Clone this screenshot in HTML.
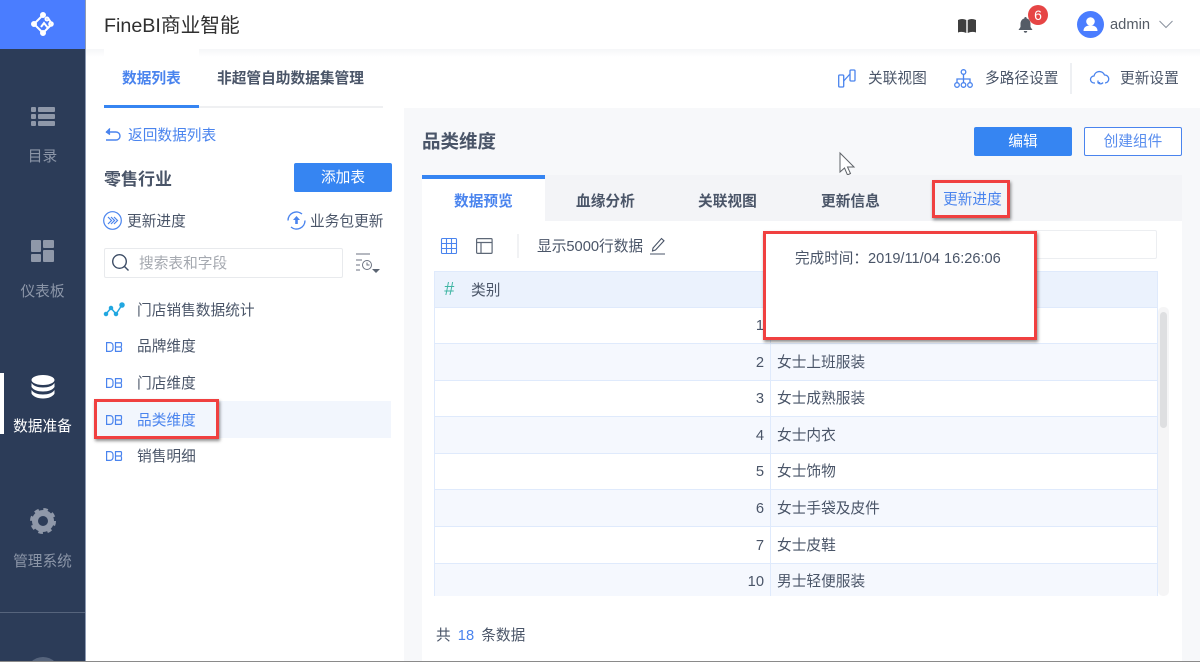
<!DOCTYPE html>
<html lang="zh-CN"><head><meta charset="utf-8"><title>FineBI</title>
<style>
*{box-sizing:border-box}
html,body{margin:0;padding:0;width:1200px;height:662px;overflow:hidden;background:#fff;font-family:"Liberation Sans","Noto Sans CJK SC",sans-serif;color:#3d4d66}
#root{position:absolute;left:0;top:0;width:1200px;height:662px;overflow:hidden;background:#fff}
.a{position:absolute;white-space:nowrap}
.t{position:absolute;white-space:nowrap;font-size:14.7px;line-height:20px;color:#4a5568;margin-top:1px}
.b{font-weight:700}
svg{position:absolute;overflow:visible}
.redbox{position:absolute;border:3px solid #f04040;box-shadow:1px 2px 3px rgba(0,0,0,.45)}
.row{position:absolute;left:434px;width:724px;height:37px;border:1px solid #dfeafc;border-width:0 1px 1px 1px}
.row.o{background:#f5f8fe}
.n,.c{position:absolute;white-space:nowrap;font-size:14.7px;line-height:20px;color:#4a5568;margin-top:1px}
.n{width:330px;left:434px;text-align:right}
.c{left:777px}
.side{position:absolute;left:0;width:85px;text-align:center;font-size:14.7px;line-height:20px;color:#8c96a8;margin-top:1px}
</style></head><body><div id="root">
<!-- sidebar -->
<div class="a" style="left:0;top:0;width:85px;height:662px;background:#2c3c58"></div>
<div class="a" style="left:85px;top:0;width:1px;height:662px;background:#8e9bb3"></div>
<div class="a" style="left:0;top:0;width:85px;height:49px;background:#4a7dff"></div>
<svg style="left:31px;top:12px" width="24" height="26" viewBox="0 0 24 26" fill="none" stroke="#fff" stroke-width="2"><path d="M12 3 3 12l9 9 5-5-4-5-3 4M17 6l4 6-4 4"/><circle cx="12" cy="3" r="2" fill="#fff"/><circle cx="3" cy="12" r="2" fill="#fff"/><circle cx="12" cy="21" r="2" fill="#fff"/><circle cx="20" cy="12" r="1.800"/><circle cx="16" cy="7" r="1.500"/></svg>
<svg style="left:31px;top:107px" width="24" height="20" viewBox="0 0 24 20" fill="#8f98a9"><rect width="5" height="5" rx="1"/><rect x="7" width="17" height="5" rx="1"/><rect y="7" width="5" height="5" rx="1"/><rect x="7" y="7" width="17" height="5" rx="1"/><rect y="14" width="5" height="5" rx="1"/><rect x="7" y="14" width="17" height="5" rx="1"/></svg>
<div class="side" style="top:146px">目录</div>
<svg style="left:31px;top:240px" width="24" height="22" viewBox="0 0 24 22" fill="#8f98a9"><rect width="10" height="12" rx="1"/><rect x="12" width="11" height="8" rx="1"/><rect y="14" width="10" height="8" rx="1"/><rect x="12" y="10" width="11" height="12" rx="1"/></svg>
<div class="side" style="top:281px">仪表板</div>
<div class="a" style="left:0;top:373px;width:4px;height:61px;background:#fff"></div>
<svg style="left:31px;top:375px" width="24" height="24" viewBox="0 0 24 24" fill="#fff"><ellipse cx="12" cy="5" rx="11.500" ry="5"/><path d="M.5 8c2 3 6 4.500 11.500 4.500S21.500 11 23.500 8v4c-2 3-6 4.500-11.500 4.500S2.500 15 .5 12zM.5 15c2 3 6 4.500 11.500 4.500s9.500-1.500 11.500-4.500v3.500c-1.500 3-6 5-11.500 5S2 21.500.5 18.500z"/></svg>
<div class="side" style="top:416px;color:#fff">数据准备</div>
<svg style="left:30px;top:508px" width="26" height="26" viewBox="0 0 26 26"><circle cx="13" cy="13" r="8" fill="none" stroke="#8f98a9" stroke-width="6"/><circle cx="13" cy="13" r="11.500" fill="none" stroke="#8f98a9" stroke-width="3" stroke-dasharray="4.500 4.530"/></svg>
<div class="side" style="top:551px">管理系统</div>
<div class="a" style="left:0;top:612px;width:85px;height:1px;background:#56647c"></div>
<div class="a" style="left:26px;top:657px;width:34px;height:34px;border-radius:50%;background:#56647c"></div>
<!-- top bar -->
<div class="a" style="left:86px;top:49px;width:1114px;height:8px;background:linear-gradient(#f5f6f8,#fff)"></div>
<div class="a" style="left:104px;top:49px;width:95px;height:8px;background:#fff"></div>
<div class="a" style="left:104px;top:12px;font-size:19.700px;line-height:28px;color:#2f2f2f">FineBI商业智能</div>
<svg style="left:958px;top:18px" width="18" height="15" viewBox="0 0 18 15" fill="#3f3f3f"><path d="M0 2q4-2 8.300 0v13Q4 13 0 14.500zM9.700 2q4-2 8.300 0v12.500q-4-1.500-8.300.5z"/></svg>
<svg style="left:1018px;top:17px" width="15" height="16" viewBox="0 0 15 16" fill="#555c66"><path d="M7.500 0a1.200 1.200 0 0 1 1.200 1.500C11 2 12.500 4 12.500 7v3l2 3H.5l2-3V7c0-3 1.500-5 3.800-5.500A1.200 1.200 0 0 1 7.500 0zM5.800 14h3.400a1.700 1.700 0 0 1-3.400 0z"/></svg>
<div class="a" style="left:1028px;top:5px;width:20px;height:20px;border-radius:50%;background:#e64545;color:#fff;font-size:14px;line-height:20px;text-align:center">6</div>
<svg style="left:1077px;top:11px" width="27" height="27" viewBox="0 0 27 27"><circle cx="13.500" cy="13.500" r="13.500" fill="#4a7dff"/><circle cx="13.500" cy="10.500" r="4.300" fill="#fff"/><path d="M6.500 20c0-4 3-5.500 7-5.500s7 1.500 7 5.500z" fill="#fff"/></svg>
<div class="t" style="left:1110px;top:14px;color:#555c66">admin</div>
<svg style="left:1159px;top:20px" width="14" height="9" viewBox="0 0 14 9" fill="none" stroke="#8a929e" stroke-width="1"><path d="M.5 1 7 7.500 13.500 1"/></svg>
<!-- header tabs -->
<div class="t b" style="left:122px;top:68px;color:#4a84ee">数据列表</div>
<div class="t b" style="left:217px;top:68px">非超管自助数据集管理</div>
<div class="a" style="left:104px;top:106px;width:279px;height:2px;background:#eff0f2"></div>
<div class="a" style="left:104px;top:105px;width:95px;height:3px;background:#3685f2"></div>
<svg style="left:838px;top:69px" width="18" height="19" viewBox="0 0 18 19" fill="none" stroke="#4a84ee" stroke-width="1.300"><rect x=".7" y="6" width="5" height="12" rx="1"/><rect x="12" y="1" width="5" height="11" rx="1"/><path d="M5.700 12 12 5"/></svg>
<div class="t" style="left:868px;top:68px">关联视图</div>
<svg style="left:954px;top:69px" width="19" height="19" viewBox="0 0 19 19" fill="none" stroke="#4a84ee" stroke-width="1.300"><circle cx="9.500" cy="3" r="2.300"/><circle cx="3" cy="16" r="2.300"/><circle cx="9.500" cy="16" r="2.300"/><circle cx="16" cy="16" r="2.300"/><path d="M9.500 5.300v8.400M3 13.700V10h13v3.700"/></svg>
<div class="t" style="left:985px;top:68px">多路径设置</div>
<div class="a" style="left:1070px;top:63px;width:2px;height:31px;background:#eef0f3"></div>
<svg style="left:1090px;top:70px" width="19" height="17" viewBox="0 0 19 17" fill="none" stroke="#4a84ee" stroke-width="1.300"><path d="M5 13H4A3.500 3.500 0 0 1 4 6 5.500 5.500 0 0 1 14.500 5 4 4 0 0 1 15 13M8 12.500a3 3 0 0 0 5 0M8 10.500v2.200h2.200"/></svg>
<div class="t" style="left:1120px;top:68px">更新设置</div>
<!-- left panel -->
<svg style="left:105px;top:128px" width="16" height="14" viewBox="0 0 16 14" fill="none" stroke="#4a84ee" stroke-width="1.400"><path d="M1 4h10a3.800 3.800 0 0 1 0 8H1"/><path d="M5 0.500 1.500 4 5 6.500" fill="#4a84ee"/></svg>
<div class="t" style="left:128px;top:125px;color:#4a84ee">返回数据列表</div>
<div class="t b" style="left:104px;top:168px;font-size:17px;line-height:22px">零售行业</div>
<div class="a" style="left:294px;top:163px;width:98px;height:29px;background:#3685f2;border-radius:2px;color:#fff;font-size:14.700px;line-height:31px;text-align:center">添加表</div>
<svg style="left:103px;top:211px" width="19" height="19" viewBox="0 0 19 19" fill="none" stroke="#4a84ee" stroke-width="1.200"><circle cx="9.500" cy="9.500" r="8.800"/><path d="m5 6 3.500 3.500L5 13M8 6l3.500 3.500L8 13M11 6l3.500 3.500L11 13"/></svg>
<div class="t" style="left:127px;top:211px">更新进度</div>
<svg style="left:287px;top:211px" width="19" height="19" viewBox="0 0 19 19" fill="none" stroke="#4a84ee" stroke-width="1.400"><path d="M1 9.500A8.500 8.500 0 0 1 15 3M18 9.500A8.500 8.500 0 0 1 4 16"/><path d="M9.500 5 6 9h2.200v4h2.600V9H13z" fill="#4a84ee" stroke="none"/></svg>
<div class="t" style="left:310px;top:211px">业务包更新</div>
<div class="a" style="left:104px;top:248px;width:239px;height:30px;border:1px solid #e8eaed;border-radius:2px;background:#fff"></div>
<svg style="left:111px;top:253px" width="20" height="20" viewBox="0 0 20 20" fill="none" stroke="#3d4d66" stroke-width="1.400"><circle cx="8.500" cy="8.500" r="6.800"/><path d="m13.500 13.500 4 4"/></svg>
<div class="t" style="left:139px;top:253px;color:#a5a9b0">搜索表和字段</div>
<svg style="left:355px;top:253px" width="26" height="22" viewBox="0 0 26 22" fill="none" stroke="#6b7280" stroke-width="1"><path d="M1 1h14M1 7h6M1 12h4M1 17h4"/><circle cx="12" cy="12" r="4.500"/><path d="M12 9.500V12h2.500"/><path d="M17 16h8l-4 4z" fill="#5b6472" stroke="none"/></svg>
<!-- list -->
<div class="a" style="left:94px;top:401px;width:297px;height:37px;background:#f2f6fd"></div>
<svg style="left:104px;top:302px" width="20" height="16" viewBox="0 0 20 16" fill="none" stroke="#22a7e0" stroke-width="1.500"><path d="M2 12 7 6l5 6 6-9"/><circle cx="2" cy="12" r="1.500" fill="#22a7e0"/><circle cx="7" cy="6" r="1.500" fill="#22a7e0"/><circle cx="12" cy="12" r="1.500" fill="#22a7e0"/><circle cx="18" cy="3" r="2" fill="#22a7e0"/></svg>
<div class="t" style="left:137px;top:300px">门店销售数据统计</div>
<svg style="left:106px;top:342px" width="16" height="10" viewBox="0 0 16 10" fill="none" stroke="#4a84ee" stroke-width="1.200"><path d="M.6.600h3.400a3 3 0 0 1 3 3v2.800a3 3 0 0 1-3 3H.6zM9.500.600h5q1 0 1 1v1.800q0 1.200-1 1.600 1 .4 1 1.600v1.800q0 1-1 1h-5zM9.500 5h5.500"/></svg>
<div class="t" style="left:137px;top:336px">品牌维度</div>
<svg style="left:106px;top:378px" width="16" height="10" viewBox="0 0 16 10" fill="none" stroke="#4a84ee" stroke-width="1.200"><path d="M.6.600h3.400a3 3 0 0 1 3 3v2.800a3 3 0 0 1-3 3H.6zM9.500.600h5q1 0 1 1v1.800q0 1.200-1 1.600 1 .4 1 1.600v1.800q0 1-1 1h-5zM9.500 5h5.500"/></svg>
<div class="t" style="left:137px;top:373px">门店维度</div>
<svg style="left:106px;top:415px" width="16" height="10" viewBox="0 0 16 10" fill="none" stroke="#4a84ee" stroke-width="1.200"><path d="M.6.600h3.400a3 3 0 0 1 3 3v2.800a3 3 0 0 1-3 3H.6zM9.500.600h5q1 0 1 1v1.800q0 1.200-1 1.600 1 .4 1 1.600v1.800q0 1-1 1h-5zM9.500 5h5.500"/></svg>
<div class="t" style="left:137px;top:410px;color:#4a84ee">品类维度</div>
<div class="redbox" style="left:94px;top:399px;width:125px;height:40px"></div>
<svg style="left:106px;top:451px" width="16" height="10" viewBox="0 0 16 10" fill="none" stroke="#4a84ee" stroke-width="1.200"><path d="M.6.600h3.400a3 3 0 0 1 3 3v2.800a3 3 0 0 1-3 3H.6zM9.500.600h5q1 0 1 1v1.800q0 1.200-1 1.600 1 .4 1 1.600v1.800q0 1-1 1h-5zM9.500 5h5.500"/></svg>
<div class="t" style="left:137px;top:446px">销售明细</div>
<svg style="left:407px;top:349px" width="6" height="14" viewBox="0 0 6 14" fill="#8a929e"><path d="M0 0h2v2H0zM4 0h2v2H4zM0 4h2v2H0zM4 4h2v2H4zM0 8h2v2H0zM4 8h2v2H4zM0 12h2v2H0zM4 12h2v2H4z"/></svg>
<!-- right panel -->
<div class="a" style="left:404px;top:108px;width:796px;height:553px;background:#f7f8fa"></div>
<div class="a" style="left:422px;top:130px;font-size:18.500px;line-height:24px;font-weight:700;color:#4a5568">品类维度</div>
<div class="a" style="left:974px;top:127px;width:98px;height:29px;background:#3685f2;border-radius:2px;color:#fff;font-size:14.700px;line-height:31px;text-align:center">编辑</div>
<div class="a" style="left:1084px;top:127px;width:98px;height:29px;background:#fff;border:1px solid #4a84ee;border-radius:2px;color:#5a8eee;font-size:14.700px;line-height:29px;text-align:center">创建组件</div>
<svg style="left:839px;top:152px" width="17" height="24" viewBox="0 0 17 24" fill="#fff" stroke="#5f6368" stroke-width="1"><path d="M1 1v19l4.500-4 3 7 3-1.500-3-6.500h6.500z"/></svg>
<div class="a" style="left:422px;top:175px;width:760px;height:46px;background:#f3f4f7"></div>
<div class="a" style="left:422px;top:221px;width:760px;height:440px;background:#fff"></div>
<div class="a" style="left:422px;top:175px;width:123px;height:46px;background:#fff;border-top:4px solid #3685f2"></div>
<div class="t b" style="left:454px;top:191px;color:#4a84ee">数据预览</div>
<div class="t b" style="left:576px;top:191px">血缘分析</div>
<div class="t b" style="left:698px;top:191px">关联视图</div>
<div class="t b" style="left:821px;top:191px">更新信息</div>
<div class="t" style="left:943px;top:189px;color:#4a84ee">更新进度</div>
<div class="redbox" style="left:932px;top:180px;width:78px;height:38px"></div>
<!-- toolbar -->
<svg style="left:441px;top:238px" width="16" height="16" viewBox="0 0 16 16" fill="none" stroke="#4a84ee" stroke-width="1.100"><rect x=".5" y=".5" width="15" height="15" rx="1"/><path d="M5.500.5v15M10.500.5v15M.5 5.500h15M.5 10.500h15"/></svg>
<svg style="left:476px;top:238px" width="17" height="16" viewBox="0 0 17 16" fill="none" stroke="#5e6877" stroke-width="1.200"><rect x=".6" y=".6" width="15.500" height="14.800" rx="1"/><path d="M.6 4.500h15.500M5 4.500v11"/></svg>
<div class="a" style="left:517px;top:234px;width:2px;height:24px;background:#f1f2f4"></div>
<div class="t" style="left:537px;top:236px">显示5000行数据</div>
<svg style="left:650px;top:237px" width="16" height="18" viewBox="0 0 16 18" fill="none" stroke="#4a5568" stroke-width="1.100"><path d="M3 11 11.500 1.500l2.500 2.300L5.500 13 2.500 14zM0 17h15"/></svg>
<div class="a" style="left:1000px;top:230px;width:157px;height:29px;border:1px solid #eceef1;background:#fff;border-radius:2px"></div>
<!-- table -->
<div class="a" style="left:434px;top:271px;width:724px;height:37px;background:#ebf2fd;border:1px solid #dfeafc"></div>
<div class="a" style="left:444px;top:279px;font-size:18px;line-height:21px;color:#3fb5a3;font-style:italic">#</div>
<div class="t" style="left:471px;top:280px">类别</div>
<div class="row" style="top:307px"></div>
<div class="row o" style="top:344px"></div>
<div class="row" style="top:380px"></div>
<div class="row o" style="top:417px"></div>
<div class="row" style="top:453px"></div>
<div class="row o" style="top:490px"></div>
<div class="row" style="top:527px"></div>
<div class="row o" style="top:564px;height:32px;border-bottom:0"></div>
<div class="a" style="left:770px;top:307px;width:1px;height:289px;background:#dfeafc"></div>
<div class="n" style="top:315px">1</div>
<div class="n" style="top:352px">2</div><div class="c" style="top:352px">女士上班服装</div>
<div class="n" style="top:388px">3</div><div class="c" style="top:388px">女士成熟服装</div>
<div class="n" style="top:425px">4</div><div class="c" style="top:425px">女士内衣</div>
<div class="n" style="top:461px">5</div><div class="c" style="top:461px">女士饰物</div>
<div class="n" style="top:498px">6</div><div class="c" style="top:498px">女士手袋及皮件</div>
<div class="n" style="top:535px">7</div><div class="c" style="top:535px">女士皮鞋</div>
<div class="n" style="top:571px">10</div><div class="c" style="top:571px">男士轻便服装</div>
<div class="a" style="left:1158px;top:307px;width:11px;height:289px;background:#f5f5f6;border-radius:5px"></div>
<div class="a" style="left:1160px;top:312px;width:7px;height:116px;background:#dedfe1;border-radius:4px"></div>
<div class="t" style="left:436px;top:625px">共 <span style="color:#4a84ee;margin:0 3px">18</span> 条数据</div>
<!-- popup -->
<div class="a" style="left:965px;top:225px;width:0;height:0;border:6px solid transparent;border-top:0;border-bottom-color:#fff"></div>
<div class="redbox" style="left:763px;top:231px;width:274px;height:109px;background:#fff"></div>
<div class="a" style="left:795px;top:250px;font-size:14.600px;line-height:18px;color:#4a5568">完成时间：2019/11/04 16:26:06</div>
<div class="a" style="left:0;top:661px;width:1200px;height:1px;background:#8a8a8a"></div>
</div></body></html>
